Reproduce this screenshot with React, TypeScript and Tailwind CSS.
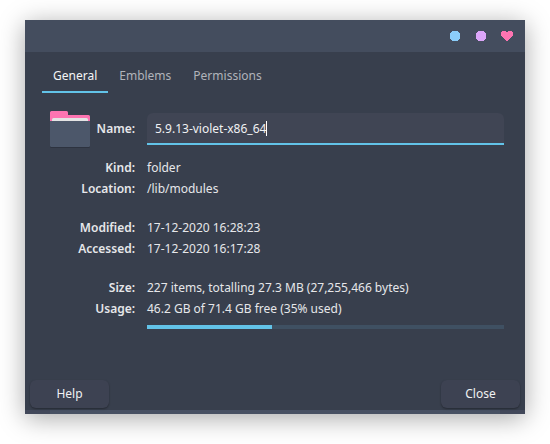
import { useState } from "react";

const tabs = ["General", "Emblems", "Permissions"];

const groups = [
  [
    { label: "Kind:", value: "folder" },
    { label: "Location:", value: "/lib/modules" },
  ],
  [
    { label: "Modified:", value: "17-12-2020 16:28:23" },
    { label: "Accessed:", value: "17-12-2020 16:17:28" },
  ],
  [
    { label: "Size:", value: "227 items, totalling 27.3 MB (27,255,466 bytes)" },
    { label: "Usage:", value: "46.2 GB of 71.4 GB free (35% used)" },
  ],
];

function FolderIcon() {
  return (
    <svg width="40" height="36" viewBox="0 0 40 36" aria-hidden="true" className="shrink-0 overflow-visible">
      <path d="M0 12V1.500Q0 0 1.500 0H16.500Q18 0 18 1.500V4H38.500Q40 4 40 5.500V12Z" fill="#fd74b1" />
      <path d="M2 12V8.500Q2 7 3.500 7H36.500Q38 7 38 8.500V12Z" fill="#e4e4e4" />
      <path d="M0 10H40V35.500Q40 37 38.500 37H1.500Q0 37 0 35.500Z" fill="#2d3340" />
      <path d="M0 10H40V34.500Q40 36 38.500 36H1.500Q0 36 0 34.500Z" fill="#4c576a" />
    </svg>
  );
}

function TitleBar() {
  return (
    <header className="flex h-8 items-center justify-end gap-4 bg-[#444d5e] pr-3">
      <button aria-label="Minimize" className="flex size-2.5">
        <svg width="10" height="10" viewBox="0 0 10 10" shapeRendering="crispEdges">
          <path d="M2 0H8V1H9V2H10V8H9V9H8V10H2V9H1V8H0V2H1V1H2Z" fill="#8bcdfa" />
        </svg>
      </button>
      <button aria-label="Maximize" className="flex size-2.5">
        <svg width="10" height="10" viewBox="0 0 10 10" shapeRendering="crispEdges">
          <path d="M2 0H8V1H9V2H10V8H9V9H8V10H2V9H1V8H0V2H1V1H2Z" fill="#dba5f8" />
        </svg>
      </button>
      <button aria-label="Close window" className="-ml-px flex h-2.5 w-3">
        <svg width="12" height="10" viewBox="0 0 12 10" shapeRendering="crispEdges">
          <path d="M1 0H5V1H7V0H11V1H12V5H11V6H10V7H9V8H8V9H7V10H5V9H4V8H3V7H2V6H1V5H0V1H1Z" fill="#fd74b1" />
        </svg>
      </button>
    </header>
  );
}

export default function App() {
  const [active, setActive] = useState("General");
  const [name, setName] = useState("5.9.13-violet-x86_64");
  const buttonStyle =
    "h-7 w-[79px] rounded-md bg-[#3d4252] text-[#f0f1f3] shadow-[0_1px_2px_rgba(0,0,0,0.35)]";

  return (
    <div className="min-h-screen bg-white px-[25px] pt-5 pb-[30px] font-['Noto_Sans',sans-serif] text-xs text-[#e6e7ea]">
      <main className="bg-[#383f4d] shadow-[0_4px_24px_rgba(0,0,0,0.35)]">
        <TitleBar />
        <nav role="tablist" className="flex px-[17px] pt-2">
          {tabs.map((tab) => (
            <button
              key={tab}
              role="tab"
              aria-selected={tab === active}
              onClick={() => setActive(tab)}
              className={
                tab === active
                  ? "h-[33px] border-b-2 border-[#62c3e8] px-[11px] text-[#f4f5f6]"
                  : "h-[33px] border-b-2 border-transparent px-[11px] text-[#b0b3ba]"
              }
            >
              {tab}
            </button>
          ))}
        </nav>

        <section className="pt-[18px] pr-[21px] pl-[25px]">
          <div className="flex items-start gap-3">
            <div className="flex w-[85px] shrink-0 items-center justify-between">
              <FolderIcon />
              <label htmlFor="name" className="font-semibold">
                Name:
              </label>
            </div>
            <div className="relative min-w-0 flex-1 pt-0.5">
              <input
                id="name"
                value={name}
                spellCheck={false}
                onChange={(event) => setName(event.target.value)}
                className="block h-8 w-full rounded-t-md border-b-2 border-[#62c3e8] bg-[#404554] px-2 text-[#f0f1f3] outline-none"
              />
              <span className="absolute top-2.5 left-[119px] h-[15px] w-px bg-white" />
            </div>
          </div>

          <div className="flex flex-col gap-[18px] pt-2.5">
            {groups.map((rows) => (
              <dl key={rows[0].label}>
                {rows.map((row) => (
                  <div key={row.label} className="flex gap-3 leading-[21px]">
                    <dt className="w-[85px] shrink-0 text-right font-semibold">{row.label}</dt>
                    <dd className="min-w-0 flex-1">{row.value}</dd>
                  </div>
                ))}
              </dl>
            ))}
          </div>

          <div
            role="progressbar"
            aria-label="Disk usage"
            aria-valuenow={35}
            className="mt-1.5 ml-[97px] h-1 bg-[#3f5062]"
          >
            <div className="h-full w-[35%] bg-[#62c3e8]" />
          </div>
        </section>

        <footer className="flex justify-between px-[5px] pt-[51px] pb-0.5">
          <button className={buttonStyle}>Help</button>
          <button className={buttonStyle}>Close</button>
        </footer>
        <div className="h-1 bg-[#42485a] px-[25px]">
          <div className="h-full bg-[#485163]" />
        </div>
      </main>
    </div>
  );
}
